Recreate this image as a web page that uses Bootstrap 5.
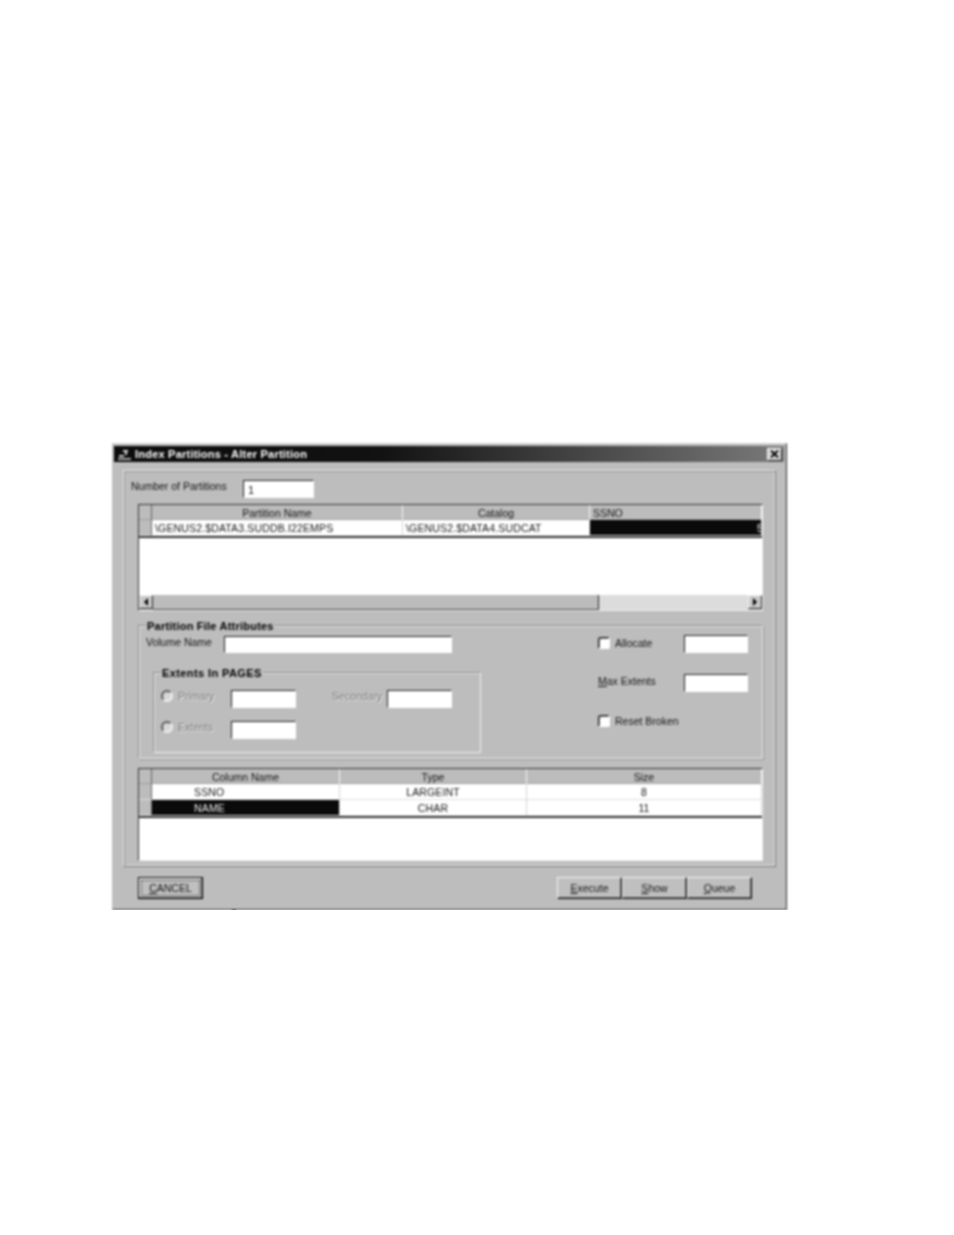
<!DOCTYPE html>
<html lang="en">
<head>
<meta charset="utf-8">
<title>Index Partitions - Alter Partition</title>
<link href="https://cdn.jsdelivr.net/npm/bootstrap@5.3.0/dist/css/bootstrap.min.css" rel="stylesheet">
<style>
html,body{background:#fff;margin:0;}
body{font-family:"Liberation Sans",Arial,sans-serif;font-size:10.5px;color:#141414;line-height:12px;}
.pagewrap{padding:443px 0 0 112px;}
.win{position:relative;width:675px;height:467px;background:#bdbdbd;border:1px solid;border-color:#d8d8d8 #2c2c2c #3a3a3a #bdbdbd;padding:2px 2px 0 1px;filter:blur(.8px);}
.win-foot-mark{position:absolute;left:119px;bottom:-4px;width:4px;height:3px;background:#555;}
.titlebar{height:16px;background:linear-gradient(90deg,#0c0c0c 0%,#121212 40%,#7a7a7a 100%);color:#fff;font-weight:700;font-size:11px;letter-spacing:.22px;padding-left:2px;}
.title-logo{width:17px;height:14px;flex:none;margin-right:2px;}
.closebtn{width:15px;height:13px;background:#d6d6d6;border:1px solid;border-color:#f4f4f4 #222 #222 #f4f4f4;margin-right:2px;flex:none;}
.panel{width:653px;height:397px;margin:8px 0 0 9px;border:1px solid;border-color:#f0f0f0 #707070 #707070 #f0f0f0;box-shadow:inset 1px 1px 0 #8c8c8c,inset -1px -1px 0 #ececec;padding-left:1px;}
.numrow{margin-top:9px;padding-left:6px;height:18px;}
.numlbl{width:112px;margin-top:-6px;}
.field{display:block;height:18px;width:65px;min-height:0;padding:2px 0 0 4px;font-size:11px;line-height:12px;color:#111;background:#fff;border:1px solid;border-color:#1c1c1c #fff #fff #1c1c1c;border-radius:0;box-shadow:none;}
.field-num{width:71px;}
.field-vol{width:228px;height:17px;}
.gridbox{margin-left:13px;width:625px;background:#fff;border:1px solid;border-color:#333 #f0f0f0 #f0f0f0 #333;position:relative;}
.gridtop{height:107px;margin-top:6px;}
.gridbot{height:93px;margin-top:9px;}
.wintable{table-layout:fixed;border-collapse:separate;border-spacing:0;width:623px;margin:0;color:#141414;font-size:10.5px;line-height:12px;--bs-table-bg:transparent;--bs-table-border-color:transparent;border-bottom:2px solid #333;}
.wintable>*>tr>*{padding:0 3px;height:16px;border:0;border-right:1px solid #d4d4d4;border-bottom:1px solid #dedede;font-weight:400;vertical-align:middle;white-space:nowrap;overflow:hidden;background:#fff;color:#141414;}
.wintable>*>tr>td{letter-spacing:.15px;}
.wintable>thead>tr>th{height:15px;background:#bcbcbc;text-align:center;border-right:1px solid #f4f4f4;border-bottom:0;box-shadow:inset 0 -1px 0 #a0a0a0;}
.wintable>*>tr>.rowhead{padding:0;background:#bcbcbc;border-right:1px solid #666;}
.wintable>tbody>tr>.selcell{background:#0a0a0a;color:#eee;}
.wintable>tbody>tr>.ra{padding:0 0 0 167px;}
.wintable>thead>tr>.tl{text-align:left;}
.wintable>*>tr>.tc{text-align:center;}
.wintable>*>tr>.pl40{padding-left:42px;}
.hscroll{position:absolute;left:0;right:0;bottom:0;height:15px;background:#bcbcbc;}
.sbtn{width:14px;height:14px;background:#c8c8c8;border:1px solid;border-color:#f4f4f4 #222 #222 #f4f4f4;flex:none;}
.sthumb{width:446px;height:15px;background:#bcbcbc;border-right:1px solid #222;border-bottom:1px solid #444;flex:none;}
.strack{background-color:#dcdcdc;height:15px;}
.groupbox{position:relative;margin:14px 0 0 13px;width:625px;height:134px;border:1px solid;border-color:#8a8a8a #f0f0f0 #f0f0f0 #8a8a8a;box-shadow:inset 1px 1px 0 #e6e6e6,1px 1px 0 #909090;}
.grouplbl{position:absolute;top:-6px;left:7px;background:#bdbdbd;padding:0 1px;font-weight:700;font-size:11px;color:#000;letter-spacing:.22px;}
.grouplbl-ext{letter-spacing:.4px;}
.leftcol{width:458px;padding-top:10px;}
.volrow{padding-left:7px;}
.vollbl{width:78px;margin-top:-5px;}
.extbox{position:relative;margin:19px 0 0 14px;width:328px;height:81px;border:1px solid;border-color:#8a8a8a #f0f0f0 #f0f0f0 #8a8a8a;box-shadow:inset 1px 1px 0 #e6e6e6;padding:17px 0 0 7px;}
.extgrid{display:grid;grid-template-columns:70px 65px 36px 55px 65px;grid-template-rows:18px 18px;row-gap:13px;align-items:center;}
.dim{color:#7a7a7a;text-shadow:1px 1px 0 #ececec;margin-bottom:6px;}
.radiodot{width:12px;height:12px;margin:0 5px 0 0;padding:0;background:#d6d6d6;border:2px solid #5c5c5c;border-bottom-color:#f0f0f0;border-right-color:#f0f0f0;border-radius:50%;box-shadow:none;opacity:1;flex:none;float:none;}
.form-check-input.radiodot:disabled{opacity:1;}
.chk{width:12px;height:12px;margin:0 5px 0 0;background:#fff;border:1px solid;border-color:#222 #fff #fff #222;border-radius:0;box-shadow:inset 1px 1px 0 #777;flex:none;float:none;}
.rightcol{margin-left:0;padding-left:1px;padding-top:9px;}
.rightgrid{display:grid;grid-template-columns:86px 64px;grid-template-rows:18px 18px 12px;row-gap:21px;align-items:center;}
.rightcol .field{width:64px;}
.alloclbl{margin-bottom:2px;}
.maxlbl{margin-bottom:4px;}
.rstrow{grid-column:1 / 3;margin-top:4px;}
.foot{margin:10px 0 0 24px;width:614px;}
.winbtn{height:22px;width:65px;padding:0;font-size:10.5px;line-height:18px;color:#141414;background:#bfbfbf;border:1px solid;border-color:#f4f4f4 #111 #111 #f4f4f4;border-radius:0;box-shadow:inset -1px -1px 0 #666;}
.winbtn:hover{background:#bfbfbf;}
.winbtn-def{border:1px solid #000;outline:1px dotted #333;outline-offset:-4px;box-shadow:inset -1px -1px 0 #666,inset 1px 1px 0 #f4f4f4;}
</style>
</head>
<body>
<div class="pagewrap">
  <div class="win">
    <div class="titlebar d-flex align-items-center">
      <svg class="title-logo" viewBox="0 0 17 14" aria-hidden="true"><rect x="7" y="3" width="5" height="2" fill="#ccc"/><rect x="9" y="5" width="2" height="3" fill="#ccc"/><rect x="3" y="8" width="5" height="2" fill="#ccc"/><rect x="2" y="11" width="13" height="2" fill="#aaa"/></svg>
      <span class="flex-grow-1">Index Partitions - Alter Partition</span>
      <span class="closebtn d-flex align-items-center justify-content-center"><svg width="9" height="8" viewBox="0 0 9 8" aria-hidden="true"><path d="M1 0.5 8 7.5M8 0.5 1 7.5" stroke="#000" stroke-width="1.8"/></svg></span>
    </div>
    <div class="panel">
      <div class="numrow d-flex align-items-center">
        <span class="numlbl">Number of Partitions</span>
        <input class="form-control field field-num" type="text" value="1" aria-label="Number of Partitions">
      </div>
      <div class="gridbox gridtop">
        <table class="table wintable">
          <colgroup><col style="width:13px"><col style="width:251px"><col style="width:187px"><col></colgroup>
          <thead><tr><th class="rowhead"></th><th>Partition Name</th><th>Catalog</th><th class="tl">SSNO</th></tr></thead>
          <tbody><tr><th class="rowhead"></th><td>\GENUS2.$DATA3.SUDDB.I22EMPS</td><td>\GENUS2.$DATA4.SUDCAT</td><td class="selcell ra">5</td></tr></tbody>
        </table>
        <div class="hscroll d-flex">
          <span class="sbtn d-flex align-items-center justify-content-center"><svg width="6" height="8" viewBox="0 0 6 8" aria-hidden="true"><path d="M5 0V8L1 4Z" fill="#000"/></svg></span>
          <span class="sthumb"></span>
          <span class="strack flex-grow-1"></span>
          <span class="sbtn d-flex align-items-center justify-content-center"><svg width="6" height="8" viewBox="0 0 6 8" aria-hidden="true"><path d="M1 0V8L5 4Z" fill="#000"/></svg></span>
        </div>
      </div>
      <div class="groupbox d-flex">
        <span class="grouplbl">Partition File Attributes</span>
        <div class="leftcol">
          <div class="volrow d-flex align-items-center">
            <span class="vollbl">Volume Name</span>
            <input class="form-control field field-vol" type="text" aria-label="Volume Name">
          </div>
          <div class="extbox">
            <span class="grouplbl grouplbl-ext">Extents In PAGES</span>
            <div class="extgrid">
              <label class="d-flex align-items-center dim"><input class="form-check-input radiodot" type="radio" disabled>Primary</label>
              <input class="form-control field" type="text" aria-label="Primary">
              <span></span>
              <span class="dim">Secondary</span>
              <input class="form-control field" type="text" aria-label="Secondary">
              <label class="d-flex align-items-center dim"><input class="form-check-input radiodot" type="radio" disabled>Extents</label>
              <input class="form-control field" type="text" aria-label="Extents">
            </div>
          </div>
        </div>
        <div class="rightcol">
          <div class="rightgrid">
            <label class="d-flex align-items-center alloclbl"><input class="form-check-input chk" type="checkbox">Allocate</label>
            <input class="form-control field" type="text" aria-label="Allocate">
            <span class="maxlbl"><u>M</u>ax Extents</span>
            <input class="form-control field" type="text" aria-label="Max Extents">
            <label class="d-flex align-items-center rstrow"><input class="form-check-input chk" type="checkbox">Reset Broken</label>
          </div>
        </div>
      </div>
      <div class="gridbox gridbot">
        <table class="table wintable">
          <colgroup><col style="width:13px"><col style="width:188px"><col style="width:187px"><col></colgroup>
          <thead><tr><th class="rowhead"></th><th>Column Name</th><th>Type</th><th>Size</th></tr></thead>
          <tbody>
            <tr><th class="rowhead"></th><td class="pl40">SSNO</td><td class="tc">LARGEINT</td><td class="tc">8</td></tr>
            <tr><th class="rowhead"></th><td class="pl40 selcell">NAME</td><td class="tc">CHAR</td><td class="tc">11</td></tr>
          </tbody>
        </table>
      </div>
    </div>
    <div class="foot d-flex justify-content-between">
      <button class="btn winbtn winbtn-def" type="button"><u>C</u>ANCEL</button>
      <div class="d-flex">
        <button class="btn winbtn" type="button"><u>E</u>xecute</button>
        <button class="btn winbtn" type="button"><u>S</u>how</button>
        <button class="btn winbtn" type="button"><u>Q</u>ueue</button>
      </div>
    </div>
    <span class="win-foot-mark"></span>
  </div>
</div>
<script src="https://cdn.jsdelivr.net/npm/bootstrap@5.3.0/dist/js/bootstrap.bundle.min.js"></script>
</body>
</html>
